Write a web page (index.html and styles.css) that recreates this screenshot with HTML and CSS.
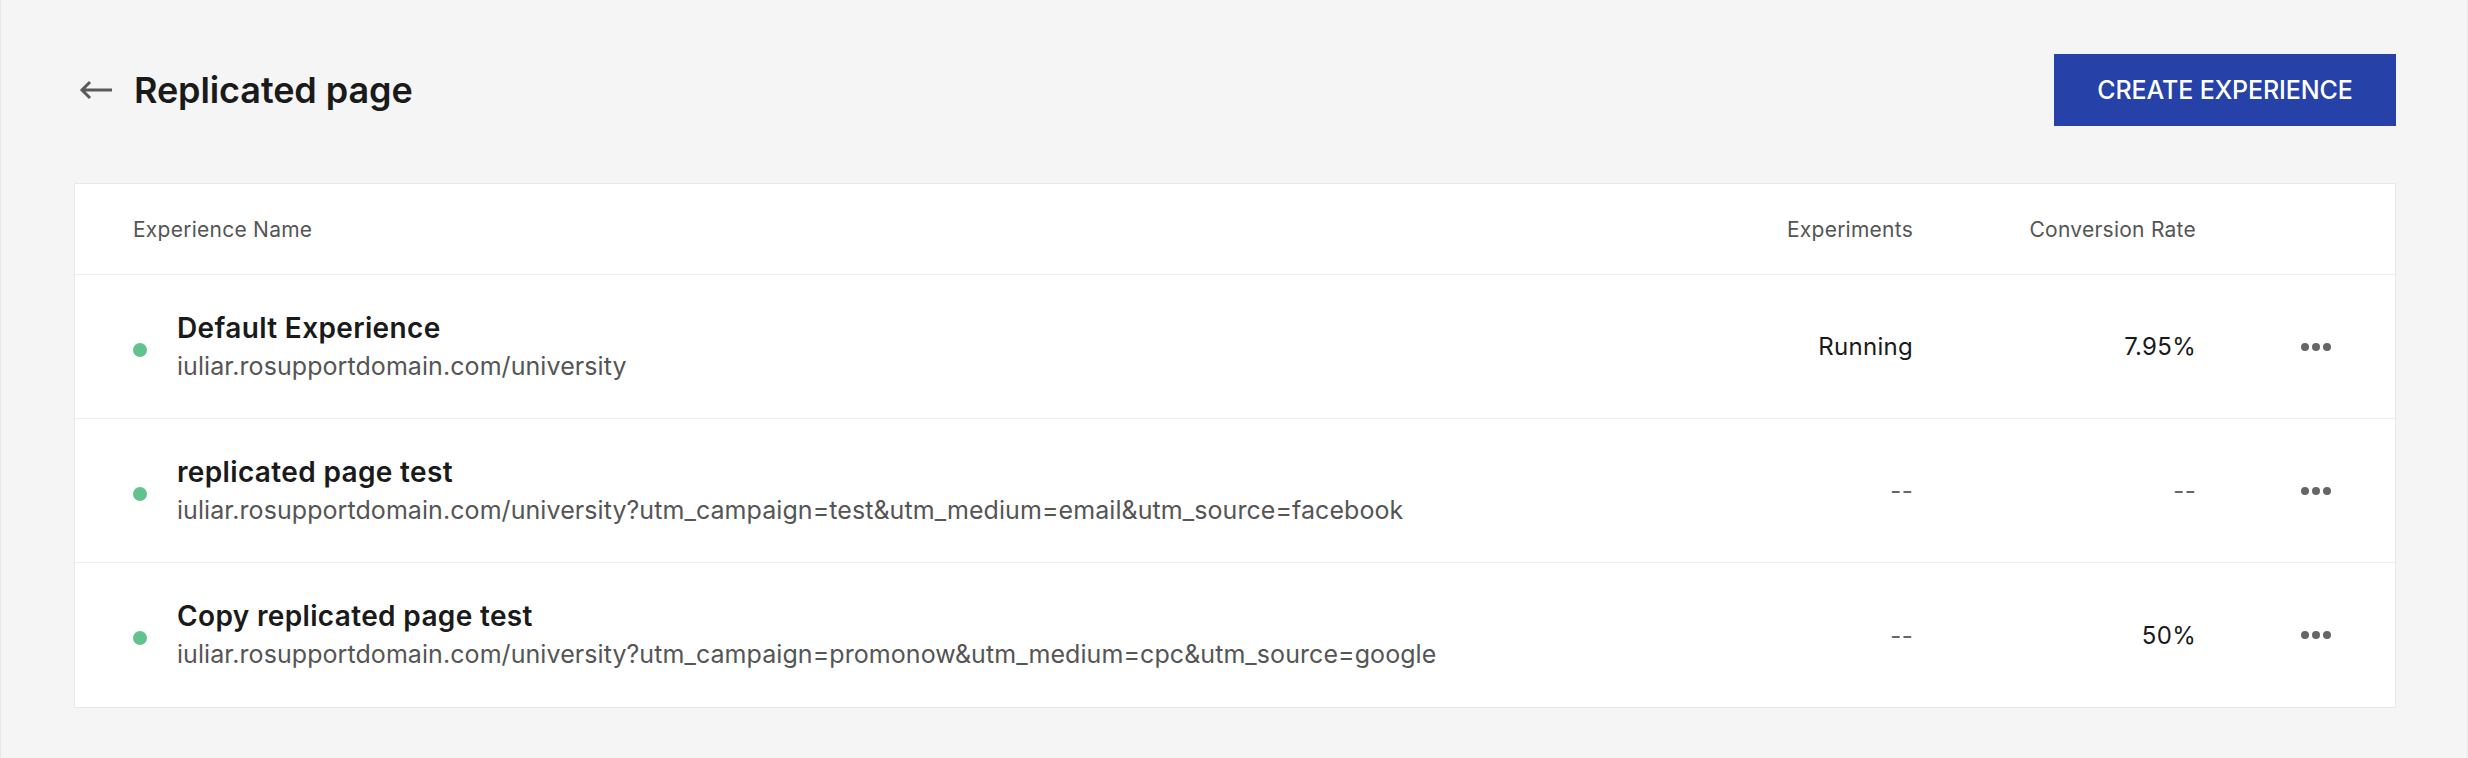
FILE: index.html
```html
<!DOCTYPE html>
<html lang="en">
<head>
<meta charset="utf-8">
<title>Replicated page</title>
<link rel="stylesheet" href="styles.css">
</head>
<body>
<div class="app">
  <header class="topbar">
    <div class="heading">
      <svg class="back" width="34" height="20" viewBox="0 0 34 20" aria-hidden="true">
        <path d="M33 10H3M11 2L3 10L11 18" fill="none" stroke="#5a5a5a" stroke-width="3" stroke-linecap="butt" stroke-linejoin="miter"/>
      </svg>
      <h1 class="title">Replicated page</h1>
    </div>
    <button class="btn-primary">CREATE EXPERIENCE</button>
  </header>

  <section class="card">
    <div class="row head">
      <div class="col-name">Experience Name</div>
      <div class="col-num">Experiments</div>
      <div class="col-num">Conversion Rate</div>
      <div class="col-act"></div>
    </div>

    <div class="row item">
      <div class="col-name name-cell">
        <span class="status"></span>
        <div class="name-text">
          <div class="exp-title">Default Experience</div>
          <div class="exp-url">iuliar.rosupportdomain.com/university</div>
        </div>
      </div>
      <div class="col-num val">Running</div>
      <div class="col-num val">7.95%</div>
      <div class="col-act"><span class="more"><i></i><i></i><i></i></span></div>
    </div>

    <div class="row item">
      <div class="col-name name-cell">
        <span class="status"></span>
        <div class="name-text">
          <div class="exp-title">replicated page test</div>
          <div class="exp-url">iuliar.rosupportdomain.com/university?utm_campaign=test&amp;utm_medium=email&amp;utm_source=facebook</div>
        </div>
      </div>
      <div class="col-num val muted">--</div>
      <div class="col-num val muted">--</div>
      <div class="col-act"><span class="more"><i></i><i></i><i></i></span></div>
    </div>

    <div class="row item">
      <div class="col-name name-cell">
        <span class="status"></span>
        <div class="name-text">
          <div class="exp-title">Copy replicated page test</div>
          <div class="exp-url">iuliar.rosupportdomain.com/university?utm_campaign=promonow&amp;utm_medium=cpc&amp;utm_source=google</div>
        </div>
      </div>
      <div class="col-num val muted">--</div>
      <div class="col-num val">50%</div>
      <div class="col-act"><span class="more"><i></i><i></i><i></i></span></div>
    </div>
  </section>
</div>
</body>
</html>
```

FILE: styles.css
```css
* { box-sizing: border-box; }

html, body {
  margin: 0;
  padding: 0;
  background: #f5f5f5;
}

body {
  font-family: Inter, "Noto Sans", "Liberation Sans", sans-serif;
  color: #1a1a1a;
}

.app {
  min-height: 100vh;
  border-left: 1px solid #e8e8e8;
  border-right: 1px solid #e8e8e8;
  padding: 54px 71px 40px 73px;
}

.topbar {
  display: flex;
  align-items: center;
  justify-content: space-between;
  height: 72px;
}

.heading {
  display: flex;
  align-items: center;
  padding-left: 5px;
}

.back {
  display: block;
  margin-right: 21px;
}

.title {
  margin: 0;
  font-size: 36px;
  line-height: 44px;
  font-weight: 600;
  color: #1a1a1a;
  letter-spacing: -0.1px;
}

.btn-primary {
  height: 72px;
  width: 342px;
  border: 0;
  border-radius: 0;
  background: #2641a8;
  color: #ffffff;
  font-family: inherit;
  font-size: 25px;
  font-weight: 500;
  letter-spacing: -0.1px;
  padding: 0;
}

.card {
  margin-top: 57px;
  background: #ffffff;
  border: 1px solid #e8e8e8;
}

.row {
  display: grid;
  grid-template-columns: 1fr 200px 283px 135px;
  align-items: center;
  padding: 0 64px 0 58px;
  border-bottom: 1px solid #ececec;
}

.row:last-child { border-bottom: 0; }

.head {
  height: 91px;
  font-size: 21px;
  letter-spacing: 0.25px;
  color: #555555;
}

.item {
  height: 144px;
}

.col-num {
  text-align: right;
}

.col-act {
  display: flex;
  justify-content: flex-end;
}

.name-cell {
  display: flex;
  align-items: center;
}

.status {
  width: 14px;
  height: 14px;
  border-radius: 50%;
  background: #62c28e;
  margin-top: 6px;
  margin-right: 30px;
  flex: none;
}

.exp-title {
  font-size: 28px;
  line-height: 36px;
  font-weight: 600;
  letter-spacing: 0.35px;
  color: #1a1a1a;
}

.exp-url {
  margin-top: 2px;
  font-size: 25px;
  line-height: 36px;
  letter-spacing: 0.07px;
  color: #555555;
}

.val {
  font-size: 24px;
  letter-spacing: 0.3px;
  color: #1a1a1a;
}

.val.muted {
  color: #666666;
}

.more {
  display: flex;
  gap: 3px;
}

.more i {
  display: block;
  width: 8px;
  height: 8px;
  border-radius: 50%;
  background: #666666;
}
```
